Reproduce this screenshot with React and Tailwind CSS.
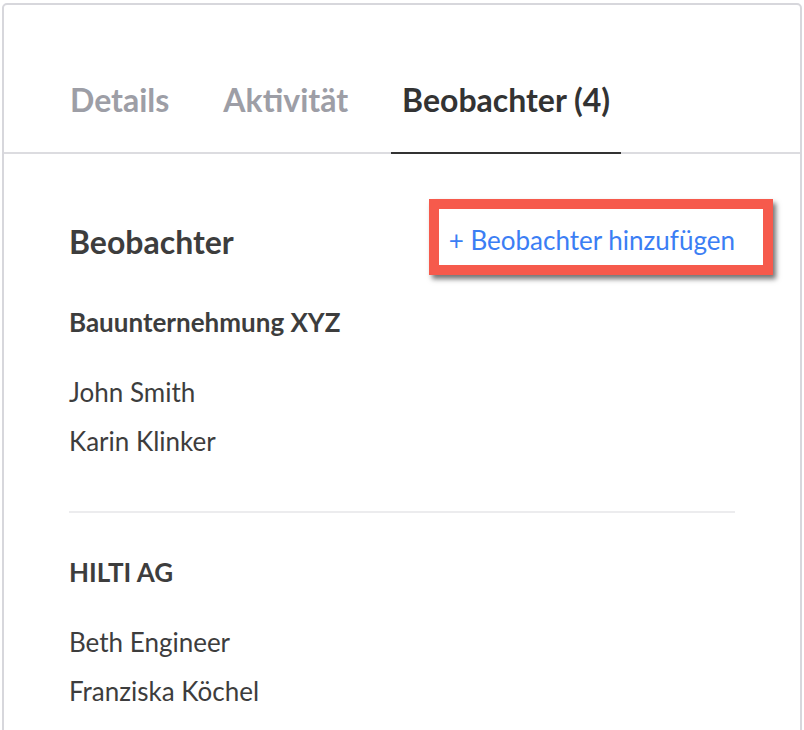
import React from "react";

const font = { fontFamily: "Lato, 'Noto Sans', sans-serif" };

function Tab({ label, active }) {
  return (
    <div
      className={
        "-mb-[2px] h-[106px] flex items-center px-[11px] border-b-2 text-[32px] font-bold " +
        (active ? "border-[#333333] text-[#333333]" : "border-transparent text-[#9d9ea6]")
      }
    >
      {label}
    </div>
  );
}

function Name({ children }) {
  return <div className="text-[26px] leading-[49px] text-[#3d3d3d]">{children}</div>;
}

export default function App() {
  return (
    <div className="w-[804px] h-[730px] overflow-hidden bg-white pt-[3px] pl-[2px]" style={font}>
      <div className="w-[800px] min-h-[780px] border-2 border-[#d7d7dc] rounded-[5px] bg-white">
        <div className="flex items-end h-[149px] border-b-2 border-[#dcdce0] pl-[55px] gap-[32px]">
          <Tab label="Details" />
          <Tab label="Aktivität" />
          <Tab label="Beobachter (4)" active />
        </div>
        <div className="pt-[64px] px-[65px]">
          <div className="h-[48px] flex items-center justify-between">
            <div className="text-[32px] font-bold text-[#3d3d3d]">Beobachter</div>
            <div className="relative leading-[48px]">
              <span className="absolute -top-[17px] -bottom-[7px] -left-[20px] -right-[38px] border-[10px] border-[#f65a4c] shadow-[3px_4px_5px_rgba(0,0,0,0.55)] pointer-events-none"></span>
              <span className="relative text-[26px] text-[#3b7ef4]">+ Beobachter hinzufügen</span>
            </div>
          </div>
          <div className="h-[40px] mt-[36px] flex items-center text-[26px] font-bold text-[#3d3d3d]">
            Bauunternehmung XYZ
          </div>
          <div className="mt-[26px]">
            <Name>John Smith</Name>
            <Name>Karin Klinker</Name>
          </div>
          <div className="mt-[45px] h-[2px] bg-[#ececee]"></div>
          <div className="h-[40px] mt-[39px] flex items-center text-[26px] font-bold text-[#3d3d3d]">
            HILTI AG
          </div>
          <div className="mt-[26px]">
            <Name>Beth Engineer</Name>
            <Name>Franziska Köchel</Name>
          </div>
        </div>
      </div>
    </div>
  );
}
